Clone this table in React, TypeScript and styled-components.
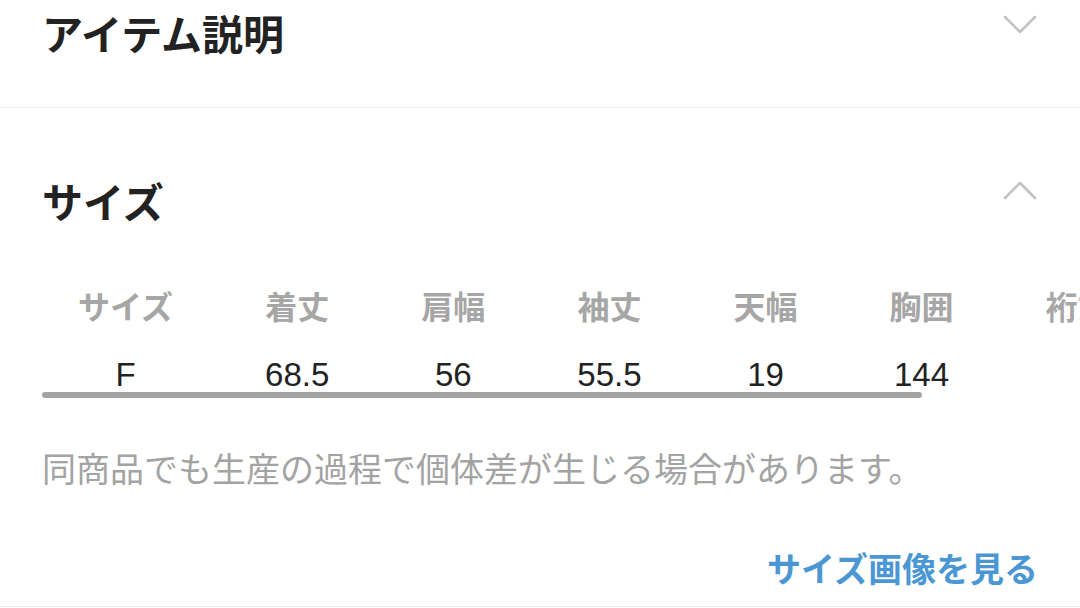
import React from "react";
import styled, { createGlobalStyle } from "styled-components";

const Global = createGlobalStyle`
  html, body { margin: 0; padding: 0; background: #fff; }
  body {
    font-family: "Noto Sans CJK JP", "Noto Sans", sans-serif;
    color: #222;
    width: 1080px;
    height: 608px;
    overflow: hidden;
  }
`;

const Page = styled.div`
  width: 1080px;
  display: flex;
  flex-direction: column;
`;

const Section = styled.section<{ $padBottom: number }>`
  border-bottom: 1px solid #ebebeb;
  padding-bottom: ${(p) => p.$padBottom}px;
  display: flex;
  flex-direction: column;
`;

const HeaderRow = styled.div<{ $top: number }>`
  margin-top: ${(p) => p.$top}px;
  height: 70px;
  padding: 0 43px 0 42px;
  display: flex;
  align-items: center;
  justify-content: space-between;
`;

const Title = styled.h2`
  margin: 0;
  font-size: 41px;
  line-height: 1;
  font-weight: 700;
  color: #222;
  letter-spacing: 0;
`;

const ChevronBox = styled.svg<{ $lift: number }>`
  width: 34px;
  height: 20px;
  margin-bottom: ${(p) => p.$lift}px;
  flex: none;
`;

const Chevron = ({ up, lift }: { up?: boolean; lift: number }) => (
  <ChevronBox viewBox="0 0 34 20" $lift={lift}>
    <polyline
      points={up ? "2,18 17,3 32,18" : "2,2 17,17 32,2"}
      fill="none"
      stroke="#c2c2c2"
      strokeWidth={2.6}
      strokeLinecap="round"
      strokeLinejoin="round"
    />
  </ChevronBox>
);

const ScrollArea = styled.div`
  margin-top: 50px;
  overflow: hidden;
  padding-left: 32px;
`;

const Table = styled.table`
  border-collapse: collapse;
  white-space: nowrap;
`;

const HeadCell = styled.th`
  padding: 0 46px;
  height: 40px;
  font-size: 32px;
  line-height: 40px;
  font-weight: 700;
  color: #a6a6a6;
  text-align: center;
`;

const DataCell = styled.td`
  padding: 33px 46px 0;
  height: 34px;
  font-family: "Liberation Sans", Arial, sans-serif;
  font-size: 33px;
  line-height: 34px;
  color: #222;
  text-align: center;
`;

const Indicator = styled.div`
  margin: 0 0 0 42px;
  width: 880px;
  height: 6px;
  border-radius: 3px;
  background: #a3a3a3;
`;

const Note = styled.p`
  margin: 50px 0 0 42px;
  font-size: 34px;
  line-height: 40px;
  font-weight: 400;
  color: #a3a3a3;
  white-space: nowrap;
`;

const LinkRow = styled.div`
  margin-top: 60px;
  padding-right: 42px;
  display: flex;
  justify-content: flex-end;
`;

const SizeLink = styled.a`
  font-size: 34px;
  line-height: 40px;
  font-weight: 700;
  color: #4b97d4;
  text-decoration: none;
`;

const headers = ["サイズ", "着丈", "肩幅", "袖丈", "天幅", "胸囲", "裄丈"];
const values = ["F", "68.5", "56", "55.5", "19", "144", ""];

export default function App() {
  return (
    <Page>
      <Global />
      <Section $padBottom={40}>
        <HeaderRow $top={-3}>
          <Title>アイテム説明</Title>
          <Chevron lift={14} />
        </HeaderRow>
      </Section>
      <Section $padBottom={18}>
        <HeaderRow $top={57}>
          <Title>サイズ</Title>
          <Chevron up lift={20} />
        </HeaderRow>
        <ScrollArea>
          <Table>
            <thead>
              <tr>
                {headers.map((h) => (
                  <HeadCell key={h}>{h}</HeadCell>
                ))}
              </tr>
            </thead>
            <tbody>
              <tr>
                {values.map((v, i) => (
                  <DataCell key={i}>{v}</DataCell>
                ))}
              </tr>
            </tbody>
          </Table>
        </ScrollArea>
        <Indicator />
        <Note>同商品でも生産の過程で個体差が生じる場合があります。</Note>
        <LinkRow>
          <SizeLink href="#">サイズ画像を見る</SizeLink>
        </LinkRow>
      </Section>
    </Page>
  );
}
